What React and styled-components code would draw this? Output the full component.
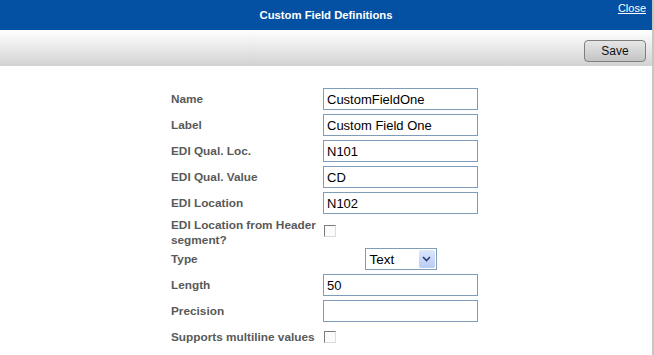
import React from "react";
import styled, { createGlobalStyle } from "styled-components";

const fields = [
  { label: "Name", value: "CustomFieldOne" },
  { label: "Label", value: "Custom Field One" },
  { label: "EDI Qual. Loc.", value: "N101" },
  { label: "EDI Qual. Value", value: "CD" },
  { label: "EDI Location", value: "N102" },
];

export default function App() {
  return (
    <>
      <GlobalStyle />
      <Dialog>
        <TitleBar>
          <Title>Custom Field Definitions</Title>
          <CloseLink href="#">Close</CloseLink>
        </TitleBar>
        <Toolbar>
          <SaveBtn>Save</SaveBtn>
        </Toolbar>
        <Form>
          {fields.map((f) => (
            <Row key={f.label}>
              <Label>{f.label}</Label>
              <TextBox defaultValue={f.value} />
            </Row>
          ))}
          <Row align="flex-start" gap="0">
            <Label>
              EDI Location from Header
              <br />
              segment?
            </Label>
            <CheckBox top="7px" />
          </Row>
          <Row>
            <Label>Type</Label>
            <SelectCell>
              <Select>
                <SelectText>Text</SelectText>
                <SelectArrow>
                  <svg width="9" height="6" viewBox="0 0 9 6">
                    <path d="M1 1 L4.5 4.5 L8 1" fill="none" stroke="#2c3f7a" strokeWidth="1.6" />
                  </svg>
                </SelectArrow>
              </Select>
            </SelectCell>
          </Row>
          <Row>
            <Label>Length</Label>
            <TextBox defaultValue="50" />
          </Row>
          <Row>
            <Label>Precision</Label>
            <TextBox defaultValue="" />
          </Row>
          <Row>
            <Label>Supports multiline values</Label>
            <CheckBox />
          </Row>
        </Form>
      </Dialog>
    </>
  );
}

const GlobalStyle = createGlobalStyle`
  body {
    margin: 0;
    background: #ffffff;
    font-family: "Liberation Sans", Arial, sans-serif;
  }
`;

const Dialog = styled.div`
  width: 654px;
  height: 355px;
  box-sizing: border-box;
  border-right: 2px solid #c6c6c6;
  background: #ffffff;
`;

// titre
const TitleBar = styled.div`
  position: relative;
  height: 30px;
  background: #0450a2;
  display: flex;
  align-items: center;
  justify-content: center;
`;
const Title = styled.span`
  color: #ffffff;
  font-size: 11.3px;
  font-weight: bold;
`;
const CloseLink = styled.a`
  position: absolute;
  right: 6px;
  top: 2px;
  color: #ffffff;
  font-size: 11px;
  text-decoration: underline;
`;

// barre d'outils
const Toolbar = styled.div`
  height: 36px;
  background: linear-gradient(#ffffff, #d2d2d2);
  display: flex;
  justify-content: flex-end;
  align-items: center;
  padding-right: 6px;
`;
const SaveBtn = styled.button`
  width: 62px;
  height: 22px;
  margin-top: 5px;
  border: 1px solid #7e7e7e;
  border-radius: 4px;
  background: linear-gradient(#e6e6e6, #c4c4c4);
  font-family: "Liberation Sans", Arial, sans-serif;
  font-size: 12px;
  color: #111;
  padding: 0;
`;

// formulaire
const Form = styled.div`
  padding: 22px 0 0 171px;
`;
const Row = styled.div`
  display: flex;
  align-items: ${(p) => p.align || "center"};
  min-height: 22px;
  margin-bottom: ${(p) => p.gap || "4px"};
`;
const Label = styled.div`
  width: 152px;
  font-size: 11.8px;
  font-weight: bold;
  color: #595959;
  line-height: 15px;
`;
const TextBox = styled.input`
  width: 155px;
  height: 22px;
  box-sizing: border-box;
  border: 1px solid #7f9db9;
  padding: 1px 3px 0;
  font-family: "Liberation Sans", Arial, sans-serif;
  font-size: 13px;
  color: #000;
  outline: none;
`;
const CheckBox = styled.span`
  display: block;
  width: 12px;
  height: 12px;
  margin-left: 1px;
  margin-top: ${(p) => p.top || "0"};
  box-sizing: border-box;
  border-top: 1px solid #7a7a7a;
  border-left: 1px solid #7a7a7a;
  border-right: 1px solid #dcdcdc;
  border-bottom: 1px solid #dcdcdc;
  background: #fbfbfb;
`;
const SelectCell = styled.div`
  width: 155px;
  display: flex;
  justify-content: center;
`;
const Select = styled.div`
  width: 72px;
  height: 22px;
  box-sizing: border-box;
  border: 1px solid #7f9db9;
  display: flex;
  align-items: center;
  justify-content: space-between;
  padding: 1px;
`;
const SelectText = styled.span`
  font-size: 13.5px;
  color: #000;
  padding-left: 3px;
`;
const SelectArrow = styled.span`
  width: 16px;
  height: 18px;
  background: linear-gradient(#dde7fb, #b9cbf3);
  border-radius: 2px;
  display: flex;
  align-items: center;
  justify-content: center;
`;
